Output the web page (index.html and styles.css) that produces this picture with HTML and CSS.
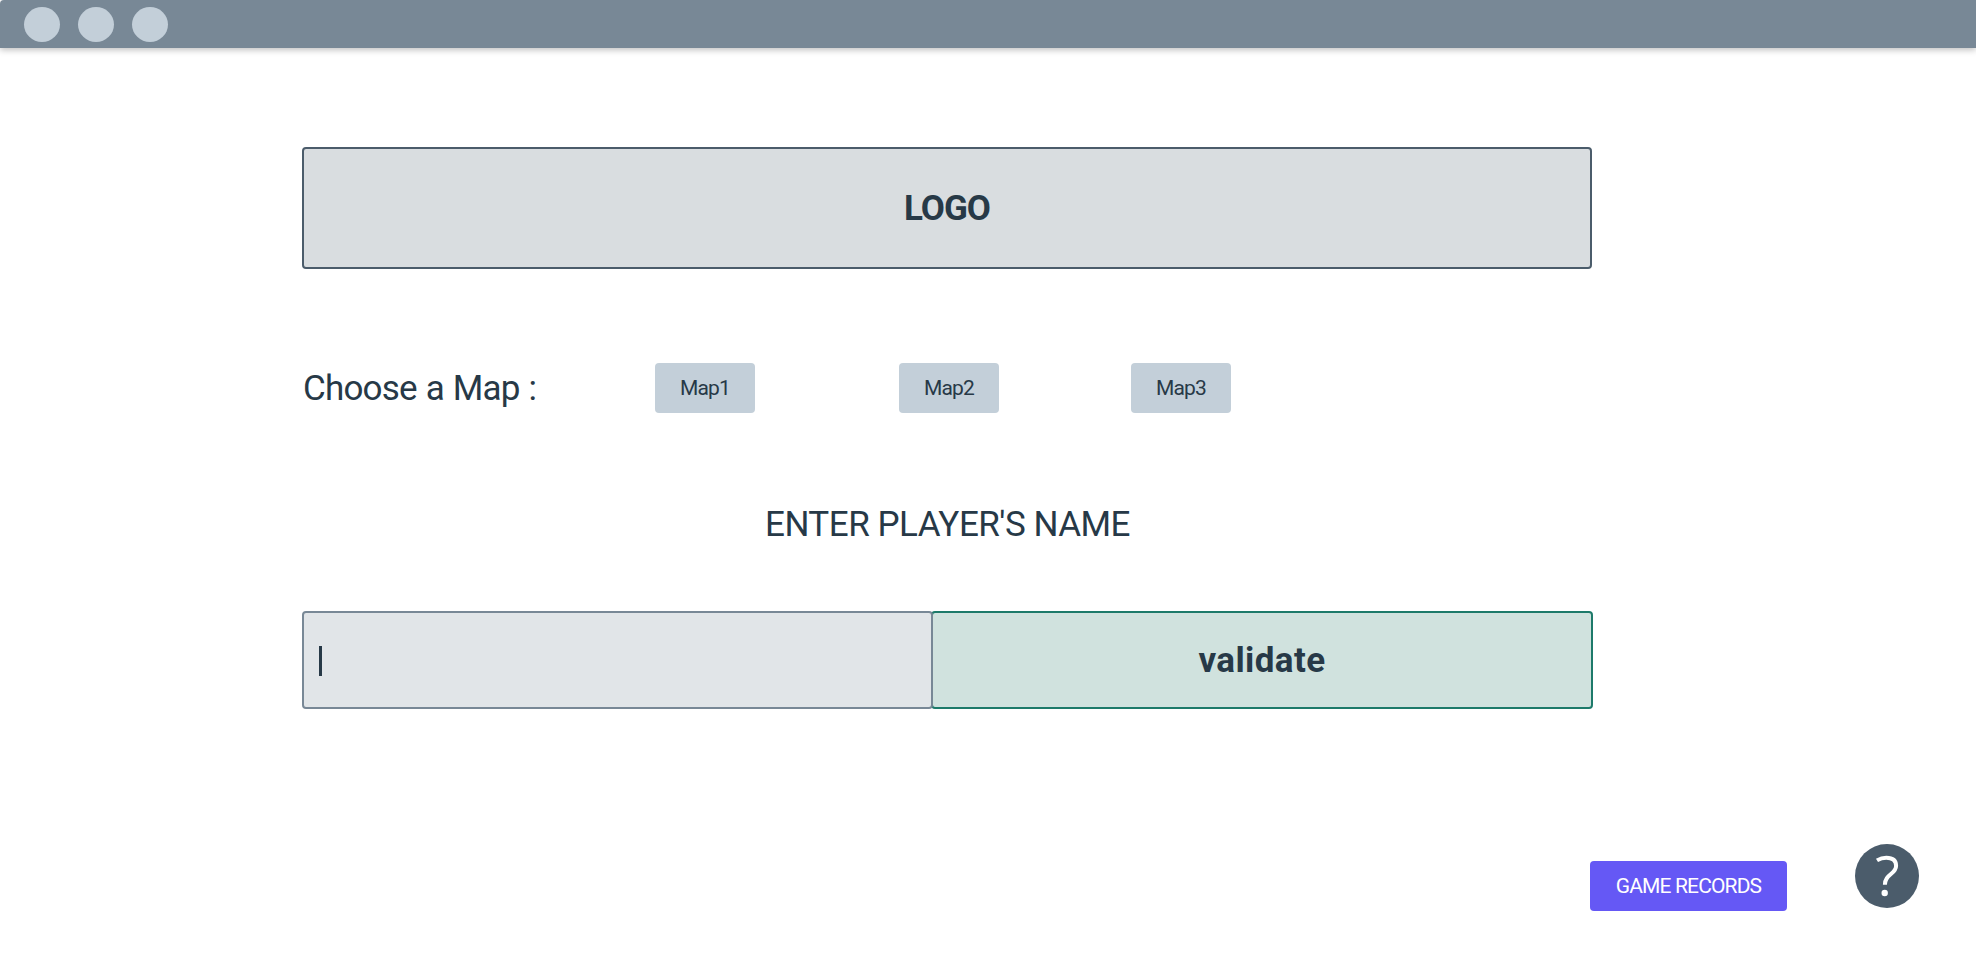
FILE: index.html
```html
<!DOCTYPE html>
<html lang="en">
<head>
<meta charset="utf-8">
<title>Choose a map</title>
<link rel="stylesheet" href="styles.css">
</head>
<body>
<header class="titlebar"><span class="dot"></span><span class="dot"></span><span class="dot"></span></header>
<main class="content">
  <h1 class="logo"><span>LOGO</span></h1>
  <section class="maps">
    <h2 class="maps-label">Choose a Map :</h2>
    <button class="map-button">Map1</button>
    <button class="map-button">Map2</button>
    <button class="map-button">Map3</button>
  </section>
  <h2 class="name-title">ENTER PLAYER'S NAME</h2>
  <form class="name-form">
    <div class="name-field"><span class="caret"></span></div>
    <button class="validate" type="button">validate</button>
  </form>
</main>
<footer class="footer">
  <button class="records">GAME RECORDS</button>
  <svg class="help" width="64" height="64" viewBox="0 0 64 64" role="img" aria-label="Help">
    <circle cx="32" cy="32" r="32" fill="#4b5c6b"/>
    <path d="M22 16.4Q26.5 13.7 31.3 13.7Q41.1 13.7 41.1 21.7C41.1 30.5 29.9 29.8 29.9 40.7" fill="none" stroke="#fff" stroke-width="4"/>
    <circle cx="29.7" cy="49" r="3.2" fill="#fff"/>
  </svg>
</footer>
</body>
</html>
```
FILE: styles.css
```css
* { box-sizing: border-box; }
body {
  margin: 0;
  height: 960px;
  overflow: hidden;
  background: #fff;
  color: #273947;
  font-family: Roboto, "Liberation Sans", sans-serif;
  font-size: 35px;
}
h1, h2 { margin: 0; font-size: inherit; font-weight: 400; white-space: nowrap; }
button { padding: 0; border: 0; color: inherit; font: inherit; white-space: nowrap; }
.titlebar {
  display: flex;
  gap: 18px;
  height: 48px;
  padding: 7px 24px;
  background: #788896;
  border-radius: 4px 0 0 0;
  box-shadow: 0 2px 6px rgba(0, 0, 0, .25);
}
.dot { width: 36px; height: 35px; border-radius: 50%; background: #c3cfd9; }
.content { width: 1291px; margin: 99px 0 0 302px; }
.logo {
  display: flex;
  align-items: center;
  justify-content: center;
  width: 1290px;
  height: 122px;
  border: 2px solid #4b5c6b;
  border-radius: 4px;
  background: #d9dde0;
  font-weight: 700;
  letter-spacing: -1px;
}
.maps {
  display: grid;
  grid-template-columns: 353px 244px 232px 100px;
  align-items: center;
  height: 50px;
  margin-top: 94px;
}
.maps-label { padding-left: 1px; letter-spacing: -.8px; word-spacing: 1px; }
.map-button {
  width: 100px;
  height: 50px;
  border-radius: 4px;
  background: #c3cfd9;
  font-size: 21px;
  letter-spacing: -.9px;
}
.name-title {
  height: 42px;
  margin-top: 91px;
  line-height: 42px;
  text-align: center;
  letter-spacing: -.5px;
}
.name-form { display: flex; height: 98px; margin-top: 65px; }
.name-field {
  z-index: 1;
  display: flex;
  align-items: center;
  width: 631px;
  margin-right: -2px;
  padding: 2px 0 0 15px;
  border: 2px solid #788896;
  border-radius: 4px;
  background: #e1e5e8;
}
.caret { width: 3px; height: 30px; background: #273947; }
.validate {
  flex: 1;
  border: 2px solid #1d7a6a;
  border-radius: 4px;
  background: #d0e2de;
  font-weight: 700;
  letter-spacing: .4px;
}
.footer { display: flex; justify-content: flex-end; gap: 68px; margin-top: 135px; padding-right: 57px; }
.records {
  width: 197px;
  height: 50px;
  margin-top: 17px;
  border-radius: 4px;
  background: #6558f5;
  color: #fff;
  font-size: 21px;
  letter-spacing: -.85px;
}
.help { display: block; }
```
